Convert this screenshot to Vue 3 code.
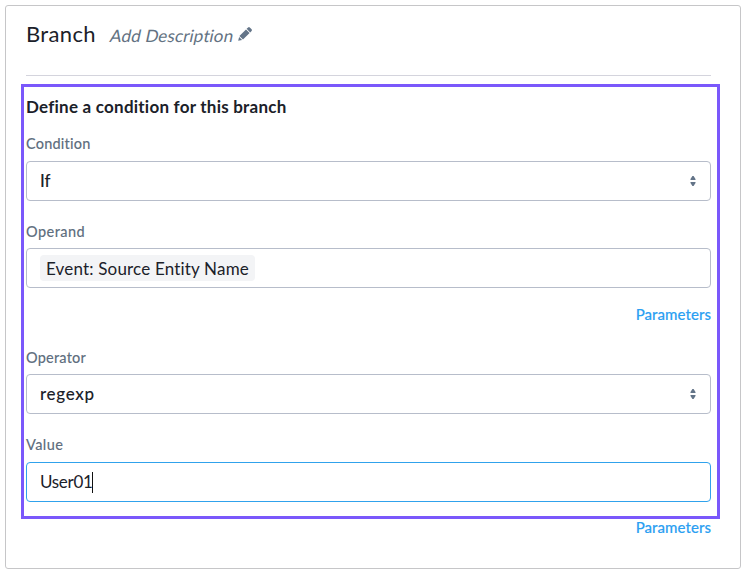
<script setup>
import { ref } from 'vue'

const condition = ref('If')
const operand = ref('Event: Source Entity Name')
const operator = ref('regexp')
const value = ref('User01')
</script>

<template>
  <main class="card">
    <header class="head">
      <h1 class="title">Branch</h1>
      <span class="desc">Add Description</span>
      <svg class="pencil" width="14" height="14" viewBox="0 0 14 14">
        <path d="M0.2 13.8 L1.1 9.9 L4.1 12.9 Z M1.4 9 L8 2.4 L11.6 6 L5 12.6 Z M8.6 1.8 L10.1 .4 Q11 -.3 11.8 .4 L13.6 2.2 Q14.3 3 13.6 3.9 L12.2 5.4 Z" />
      </svg>
    </header>

    <section class="form">
      <h2 class="heading">Define a condition for this branch</h2>

      <label class="label l-condition">Condition</label>
      <div class="field">
        <span class="value strong">{{ condition }}</span>
        <svg class="sort" width="6" height="10" viewBox="0 0 6 10"><path d="M2.4 0 H3.6 L5.5 3 V4 H.5 V3 Z M.5 6 H5.5 V7 L3.6 10 H2.4 L.5 7 Z" /></svg>
      </div>

      <label class="label l-operand">Operand</label>
      <div class="field">
        <span class="chip">{{ operand }}</span>
      </div>
      <a class="link">Parameters</a>

      <label class="label l-operator">Operator</label>
      <div class="field">
        <span class="value strong regexp">{{ operator }}</span>
        <svg class="sort" width="6" height="10" viewBox="0 0 6 10"><path d="M2.4 0 H3.6 L5.5 3 V4 H.5 V3 Z M.5 6 H5.5 V7 L3.6 10 H2.4 L.5 7 Z" /></svg>
      </div>

      <label class="label l-value">Value</label>
      <div class="field focused">
        <span class="value user">{{ value }}</span><i class="caret"></i>
      </div>
      <a class="link last">Parameters</a>
    </section>
    <div class="highlight"></div>
  </main>
</template>

<style>
body {
  background: #fff;
}
</style>

<style scoped>
.card {
  position: relative;
  box-sizing: border-box;
  width: 736px;
  height: 564px;
  margin: 5px 0 0 5px;
  padding: 0 29px 0 20px;
  border: 1px solid #c6c6c8;
  border-radius: 3px;
  font-family: Lato, "Open Sans", sans-serif;
  font-variant-ligatures: none;
  color: #1b2129;
}
.head {
  box-sizing: border-box;
  width: 685px;
  height: 70px;
  padding-top: 13px;
  display: flex;
  border-bottom: 1px solid #d4d4dd;
}
.title {
  margin: 0;
  width: 82px;
  font-size: 22px;
  line-height: 30px;
  font-weight: 400;
  letter-spacing: 0.35px;
}
.desc {
  width: 130px;
  padding-top: 2px;
  font-size: 17px;
  line-height: 30px;
  letter-spacing: 0.15px;
  color: #637282;
  white-space: nowrap;
  transform: skewX(-12deg);
}
.pencil {
  margin-top: 8px;
  fill: #637488;
}
.form {
  width: 685px;
  display: flex;
  flex-direction: column;
}
.heading {
  margin: 21px 0 0;
  font-size: 17px;
  line-height: 20px;
  font-weight: 700;
  letter-spacing: 0.23px;
  white-space: nowrap;
}
.label {
  height: 20px;
  font-size: 14.5px;
  line-height: 20px;
  font-weight: 500;
  letter-spacing: 0.2px;
  color: #5f6f80;
  -webkit-text-stroke: 0.08px #5f6f80;
}
.l-condition {
  margin: 17px 0 7px;
}
.l-operand {
  margin: 21px 0 6px;
  letter-spacing: 0.45px;
}
.l-operator {
  margin: 24px 0 6px;
  letter-spacing: 0.2px;
}
.l-value {
  margin: 21px 0 7px;
  letter-spacing: 0.4px;
}
.field {
  box-sizing: border-box;
  height: 40px;
  padding: 0 14px 0 13px;
  display: flex;
  align-items: center;
  border: 1px solid #b7bdca;
  border-radius: 4px;
}
.focused {
  border-color: #30a2ec;
}
.value {
  font-size: 17px;
  line-height: 24px;
}
.strong {
  font-weight: 500;
  -webkit-text-stroke: 0.06px #1b2129;
}
.regexp {
  letter-spacing: 0.7px;
}
.user {
  letter-spacing: -0.3px;
}
.chip {
  box-sizing: border-box;
  width: 215px;
  height: 26px;
  padding-left: 6px;
  font-size: 17px;
  line-height: 27px;
  letter-spacing: 0.18px;
  background: #f3f4f6;
  border-radius: 4px;
  white-space: nowrap;
}
.sort {
  margin-left: auto;
  fill: #637488;
}
.caret {
  width: 1px;
  height: 21px;
  margin-left: -0.5px;
  background: #111;
}
.link {
  align-self: flex-end;
  height: 20px;
  margin-top: 16px;
  font-size: 15px;
  line-height: 20px;
  font-weight: 500;
  letter-spacing: 0.06px;
  color: #2c9ff2;
  -webkit-text-stroke: 0.15px #2c9ff2;
}
.last {
  margin-top: 15px;
}
.highlight {
  position: absolute;
  left: 15px;
  top: 78px;
  box-sizing: border-box;
  width: 699px;
  height: 435px;
  border: 3px solid #7a58fb;
  pointer-events: none;
}
</style>
